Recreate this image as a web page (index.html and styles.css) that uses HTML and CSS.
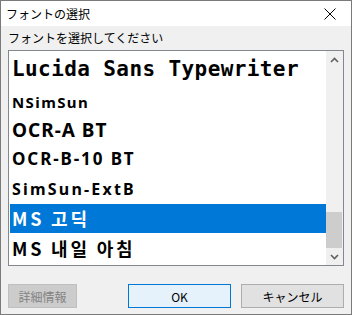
FILE: index.html
```html
<!DOCTYPE html>
<html>
<head>
    <meta charset="UTF-8">
    <title>フォントの選択</title>
    <link rel="stylesheet" href="styles.css">
</head>
<body>
    <div class="window">
        <div class="titlebar">
            <span class="title">フォントの選択</span>
            <svg class="close" width="12" height="12" viewBox="0 0 12 12">
                <path d="M0.5 0.5 L11.5 11.5 M11.5 0.5 L0.5 11.5" stroke="#000" stroke-width="1" fill="none"/>
            </svg>
        </div>

        <div class="content">
            <div class="label">フォントを選択してください</div>

            <div class="listbox">
                <div class="items">
                    <div class="item lucida">Lucida Sans Typewriter</div>
                    <div class="item nsimsun">NSimSun</div>
                    <div class="item ocra">OCR-A BT</div>
                    <div class="item ocrb">OCR-B-10 BT</div>
                    <div class="item simsun">SimSun-ExtB</div>
                    <div class="item kr selected">MS 고딕</div>
                    <div class="item kr last">MS 내일 아침</div>
                </div>
                <div class="scrollbar">
                    <div class="arrow">
                        <svg width="9" height="6" viewBox="0 0 9 6"><path d="M1 5 L4.5 1.5 L8 5" stroke="#606060" stroke-width="1.6" fill="none"/></svg>
                    </div>
                    <div class="track">
                        <div class="thumb"></div>
                    </div>
                    <div class="arrow">
                        <svg width="9" height="6" viewBox="0 0 9 6"><path d="M1 1 L4.5 4.5 L8 1" stroke="#606060" stroke-width="1.6" fill="none"/></svg>
                    </div>
                </div>
            </div>

            <div class="buttons">
                <button class="btn disabled">詳細情報</button>
                <div class="spacer"></div>
                <button class="btn default">OK</button>
                <button class="btn">キャンセル</button>
            </div>
        </div>
    </div>
</body>
</html>
```

FILE: styles.css
```css
:root {
    --face-color: #f0f0f0;
    --border-color: #7a7a7a;
    --select-color: #0078d7;
}

body {
    margin: 0;
    font-family: 'Noto Sans CJK JP', 'Noto Sans', sans-serif;
    font-size: 12px;
    color: #000;
}

.window {
    width: 352px;
    height: 315px;
    box-sizing: border-box;
    border: 1px solid var(--border-color);
    background: var(--face-color);
    display: flex;
    flex-direction: column;
}

.titlebar {
    height: 25px;
    background: #fff;
    display: flex;
    align-items: center;
    justify-content: space-between;
    padding: 0 15px 0 5px;
}

.title {
    font-size: 12px;
}

.close {
    display: block;
}

.content {
    padding: 3px 7px 0 7px;
    display: flex;
    flex-direction: column;
}

.label {
    height: 21px;
    line-height: 17px;
}

.listbox {
    height: 216px;
    box-sizing: border-box;
    border: 1px solid #828790;
    background: #fff;
    display: flex;
}

.items {
    flex: 1;
    padding: 0 0 0 1px;
    overflow: hidden;
    font-family: 'Noto Sans', 'Noto Sans CJK KR', sans-serif;
    font-weight: bold;
}

.item {
    padding-left: 2px;
    white-space: nowrap;
}

.item.selected {
    background: var(--select-color);
    color: #fff;
}

.lucida {
    height: 37px;
    line-height: 37px;
    font-family: 'DejaVu Sans Mono', monospace;
    font-size: 21px;
    letter-spacing: 0.4px;
}

.nsimsun {
    height: 28px;
    line-height: 28px;
    font-size: 15px;
    letter-spacing: 1.4px;
}

.ocra {
    height: 28px;
    line-height: 28px;
    font-size: 19px;
    letter-spacing: 1px;
}

.ocrb {
    height: 30px;
    line-height: 30px;
    font-size: 17px;
    letter-spacing: 1.9px;
}

.simsun {
    height: 30px;
    line-height: 30px;
    font-size: 16px;
    letter-spacing: 2.2px;
}

.kr {
    height: 29px;
    line-height: 29px;
    font-family: 'Noto Sans CJK KR', sans-serif;
    font-size: 18px;
    letter-spacing: 2.8px;
}

.kr.last {
    height: 31px;
    line-height: 31px;
}

.scrollbar {
    width: 17px;
    background: var(--face-color);
    display: flex;
    flex-direction: column;
}

.arrow {
    height: 17px;
    display: flex;
    align-items: center;
    justify-content: center;
}

.track {
    flex: 1;
    display: flex;
    flex-direction: column;
    justify-content: flex-end;
}

.thumb {
    height: 36px;
    margin: 0 1px 0 0;
    background: #cdcdcd;
}

.buttons {
    display: flex;
    margin-top: 18px;
    gap: 10px;
}

.spacer {
    flex: 1;
}

.btn {
    height: 24px;
    width: 103px;
    box-sizing: border-box;
    border: 1px solid #adadad;
    background: #e1e1e1;
    font-family: 'Noto Sans CJK JP', sans-serif;
    font-size: 12px;
    color: #000;
    padding: 0;
}

.btn.disabled {
    width: 69px;
    background: #cccccc;
    border-color: #bfbfbf;
    color: #838383;
}

.btn.default {
    background: #e5f1fb;
    border: 1px solid var(--select-color);
}
```
